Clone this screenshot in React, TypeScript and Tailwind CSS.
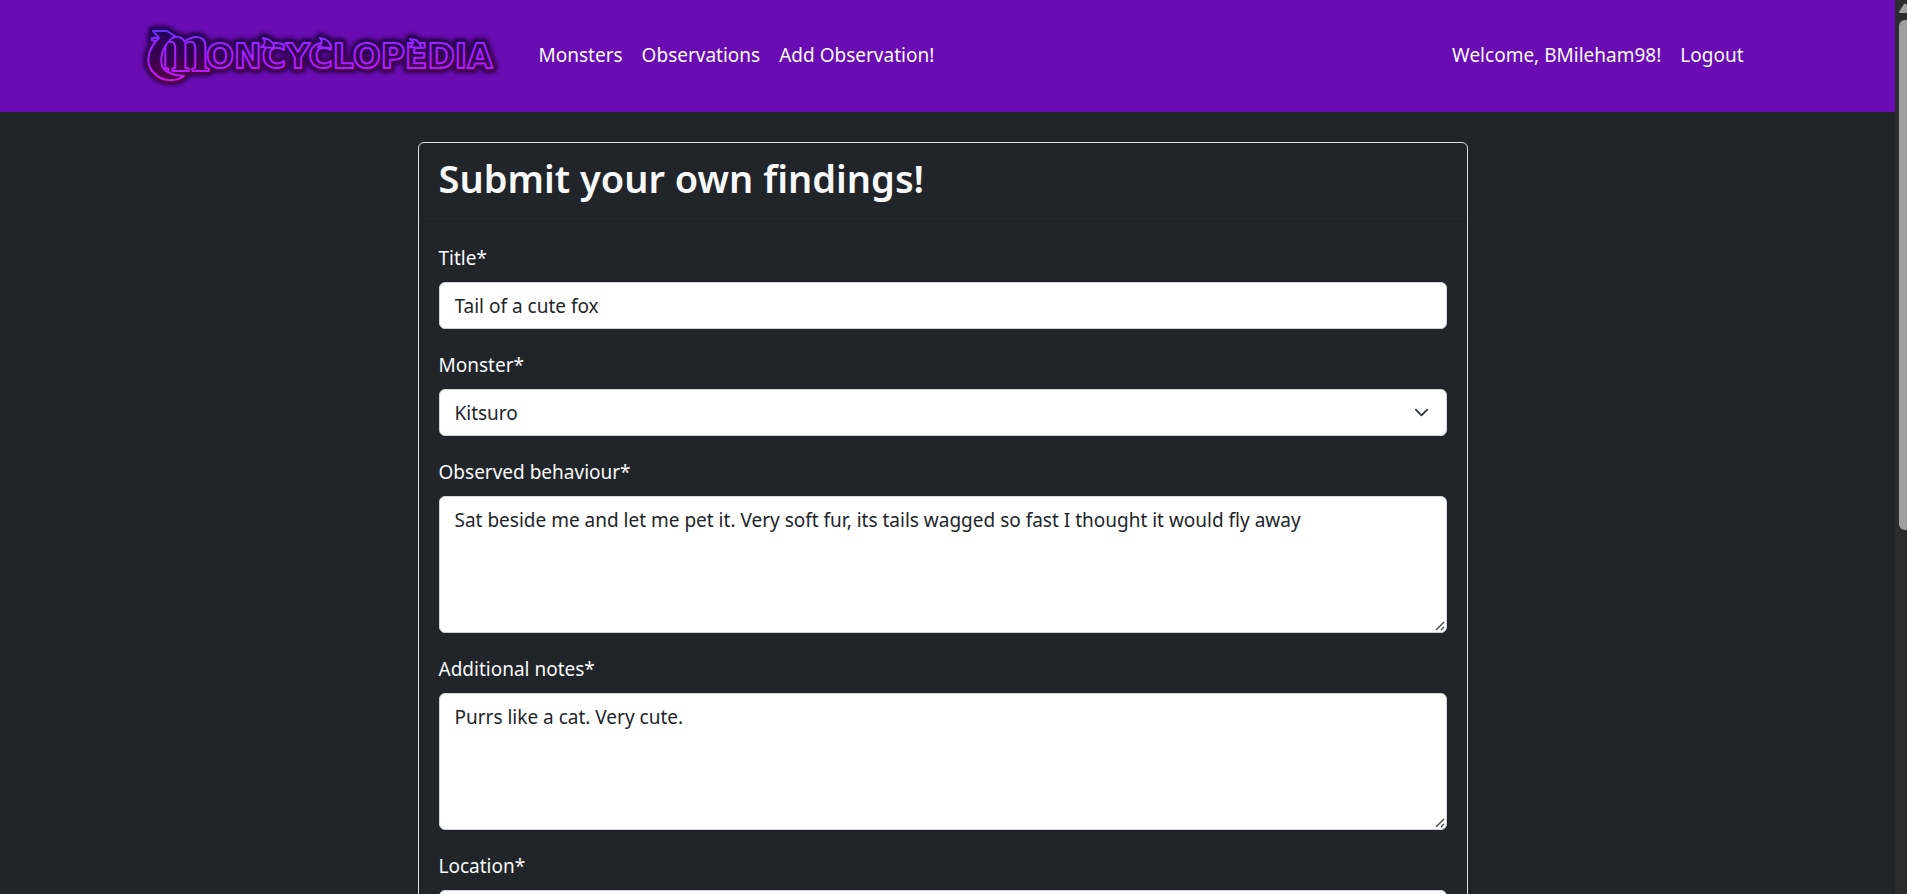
import type { ReactNode } from "react";

function LogoArt() {
  return (
    <>
      <path d="M44 25 L36 20 L22 20 L28 27 C17 38 13 52 23 62 C31 71 45 71 53 65 C43 65 34 61 31 55 C28 44 34 32 44 25 Z" />
      <path d="M130 36 C134 34 135 30 132 27 C139 28 143 32 143 37 Z" />
      <path d="M187 36 C191 34 192 30 189 27 C196 28 200 32 200 37 Z" />
      <path d="M279 36 C283 33 283 30 279 28 C286 28 290 32 290 37 Z" />
    </>
  );
}

function LogoWord({ hidden }: { hidden?: boolean }) {
  return (
    <text y="57" aria-hidden={hidden} fontWeight="700" fontFamily="'DejaVu Sans', sans-serif">
      <tspan x="19" y="60" fontSize="72" fontFamily="'Liberation Serif', serif">m</tspan>
      <tspan x="75" y="57" fontSize="33">ONCYCLOPEDIA</tspan>
    </text>
  );
}

function Logo() {
  return (
    <svg viewBox="0 0 380 90" className="block h-[90px] w-[380px] overflow-visible" role="img" aria-label="Moncyclopedia">
      <defs>
        <linearGradient id="neon" gradientUnits="userSpaceOnUse" x1="0" y1="18" x2="0" y2="70">
          <stop offset="0" stopColor="#5b35ff" />
          <stop offset="0.28" stopColor="#9a24ff" />
          <stop offset="0.7" stopColor="#ae1cff" />
          <stop offset="1" stopColor="#cf18f4" />
        </linearGradient>
        <linearGradient id="shade" gradientUnits="userSpaceOnUse" x1="0" y1="16" x2="0" y2="70">
          <stop offset="0" stopColor="#23005c" />
          <stop offset="0.6" stopColor="#3d0052" />
          <stop offset="1" stopColor="#520040" />
        </linearGradient>
        <filter id="glow" x="-10%" y="-30%" width="120%" height="160%">
          <feGaussianBlur stdDeviation="2" />
        </filter>
      </defs>
      <g fill="#2c004e" stroke="#2c004e" strokeWidth="10" strokeLinejoin="round" filter="url(#glow)">
        <LogoArt />
        <LogoWord hidden />
      </g>
      <g fill="url(#shade)" stroke="url(#shade)" strokeWidth="7" strokeLinejoin="round">
        <LogoArt />
        <LogoWord hidden />
      </g>
      <g fill="url(#shade)" stroke="url(#neon)" strokeWidth="2" strokeLinejoin="round">
        <LogoWord />
        <LogoArt />
      </g>
    </svg>
  );
}

const control =
  "block w-full rounded-md border border-[#ced4da] bg-white px-[15px] text-[19px] leading-[30px] text-[#212529]";

function Field({ id, label, children }: { id: string; label: string; children: ReactNode }) {
  return (
    <div className="mb-5">
      <label htmlFor={id} className="mb-[9px] block pt-px leading-[30px]">
        {label}
      </label>
      {children}
    </div>
  );
}

function NotesBox({ id, text }: { id: string; text: string }) {
  return (
    <div className="relative">
      <textarea id={id} defaultValue={text} className={`${control} h-[137px] resize-none py-2`} />
      <svg
        viewBox="0 0 10 10"
        className="pointer-events-none absolute bottom-0.5 right-0.5 size-[10px]"
        stroke="#444444"
        strokeWidth="1.3"
        aria-hidden="true"
      >
        <path d="M1 9 L9 1 M6 9 L9 6" />
      </svg>
    </div>
  );
}

function Navbar() {
  return (
    <header className="bg-[#6a0cb4]">
      <div className="mx-auto flex h-28 max-w-[1650px] items-center pl-2 pr-[29px]">
        <a href="#home" className="mr-7">
          <Logo />
        </a>
        <nav className="flex flex-1 items-center gap-[19px] pb-0.5">
          <a href="#monsters">Monsters</a>
          <a href="#observations">Observations</a>
          <a href="#add">Add Observation!</a>
          <span className="ml-auto">Welcome, BMileham98!</span>
          <a href="#logout">Logout</a>
        </nav>
      </div>
    </header>
  );
}

function Scrollbar() {
  return (
    <div className="flex w-3 shrink-0 flex-col overflow-hidden bg-[#2c2c2c] pl-1" aria-hidden="true">
      <svg viewBox="0 0 8 20" className="h-5 w-2 shrink-0">
        <path d="M0 12 L5 4 Q6 3 7 4 L12 12 Q12 13 11 13 L0 13 Z" fill="#9f9f9f" />
      </svg>
      <div className="h-[510px] rounded-l-md bg-[#9f9f9f]" />
    </div>
  );
}

export default function App() {
  return (
    <div className="flex h-screen overflow-hidden bg-[#212529] font-['Noto_Sans','Open_Sans',sans-serif] text-[19px] leading-[30px] text-[#f8f9fa]">
      <div className="min-w-0 flex-1 overflow-hidden">
        <Navbar />
        <main className="pr-[10px] pt-[30px]">
          <section className="mx-auto max-w-[1050px] rounded-md border border-[#dee2e6]">
            <div className="border-b border-[#1d2024] px-5 pb-[19px] pt-[11px]">
              <h1 className="text-[38px] font-semibold leading-[48px]">Submit your own findings!</h1>
            </div>
            <form className="p-5">
              <Field id="title" label="Title*">
                <input id="title" type="text" defaultValue="Tail of a cute fox" className={`${control} h-[47px]`} />
              </Field>
              <Field id="monster" label="Monster*">
                <div className="relative">
                  <select id="monster" defaultValue="Kitsuro" className={`${control} h-[47px] appearance-none`}>
                    <option>Kitsuro</option>
                  </select>
                  <svg
                    viewBox="0 0 16 16"
                    className="pointer-events-none absolute right-[18px] top-4 size-[15px]"
                    fill="none"
                    stroke="#343a40"
                    strokeWidth="2"
                    strokeLinecap="round"
                    strokeLinejoin="round"
                    aria-hidden="true"
                  >
                    <path d="m2 5 6 6 6-6" />
                  </svg>
                </div>
              </Field>
              <Field id="behaviour" label="Observed behaviour*">
                <NotesBox
                  id="behaviour"
                  text="Sat beside me and let me pet it. Very soft fur, its tails wagged so fast I thought it would fly away"
                />
              </Field>
              <Field id="notes" label="Additional notes*">
                <NotesBox id="notes" text="Purrs like a cat. Very cute." />
              </Field>
              <Field id="location" label="Location*">
                <input id="location" type="text" className={`${control} h-[47px]`} />
              </Field>
            </form>
          </section>
        </main>
      </div>
      <Scrollbar />
    </div>
  );
}
